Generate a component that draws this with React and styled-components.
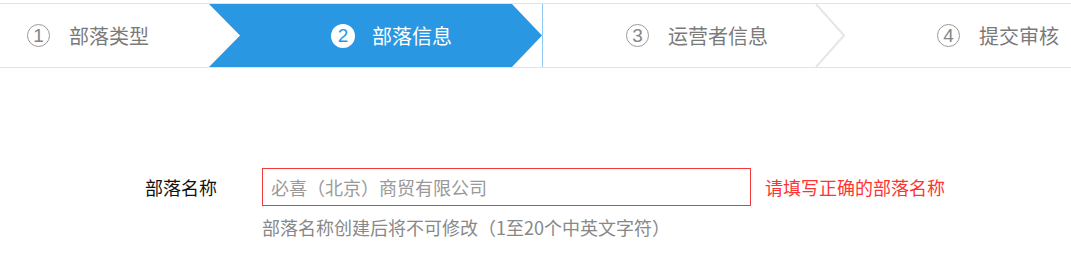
import React from 'react'
import styled, { createGlobalStyle } from 'styled-components'

const GlobalStyle = createGlobalStyle`
  body {
    margin: 0;
    background: #fff;
    font-family: "Noto Sans CJK SC", "Noto Sans", sans-serif;
  }
`

const steps = [
  { num: 1, text: '部落类型', width: 209, pad: 27 },
  { num: 2, text: '部落信息', width: 333, pad: 122, active: true },
  { num: 3, text: '运营者信息', width: 273, pad: 83, divided: true },
  { num: 4, text: '提交审核', width: 226, pad: 92 }
]

class App extends React.Component {

  renderSteps(){
    return steps.map((step) => {
      const item = (
        <Step key={step.num} width={step.width} pad={step.pad} active={step.active} divided={step.divided}>
          <Num active={step.active}>{step.num}</Num>
          <StepText active={step.active}>{step.text}</StepText>
        </Step>
      )
      if (step.num !== 3) return item
      return [
        item,
        <Chevron key="chev" width="30" height="63" viewBox="0 0 30 63">
          <polyline points="1,0 29,31.5 1,63" fill="none" stroke="#e6e6e6" strokeWidth="2" />
        </Chevron>
      ]
    })
  }

  render () {
    return (
      <Page>
        <GlobalStyle />
        <StepBar>
          {this.renderSteps()}
        </StepBar>
        <Form>
          <Row>
            <Label>部落名称</Label>
            <Input placeholder="必喜（北京）商贸有限公司" />
            <Error>请填写正确的部落名称</Error>
          </Row>
          <Hint>部落名称创建后将不可修改（1至20个中英文字符）</Hint>
        </Form>
      </Page>
    )
  }
}

const Page = styled.div`
  width: 1071px;
  padding-top: 3px;
`

const StepBar = styled.div`
  display: flex;
  height: 63px;
  border-top: 1px solid #e3e3e3;
  border-bottom: 1px solid #e3e3e3;
  overflow: hidden;
`

const Step = styled.div`
  flex: 0 0 ${(props) => props.width}px;
  box-sizing: border-box;
  display: flex;
  align-items: center;
  gap: ${(props) => props.active ? 17 : 19}px;
  padding-left: ${(props) => props.pad}px;
  background: ${(props) => props.active ? '#2a97e2' : 'transparent'};
  border-left: ${(props) => props.divided ? '1px solid #8ecaf3' : 'none'};
  clip-path: ${(props) => props.active
    ? 'polygon(0 0, calc(100% - 30px) 0, 100% 50%, calc(100% - 30px) 100%, 0 100%, 31px 50%)'
    : 'none'};
`

const Num = styled.span`
  box-sizing: border-box;
  width: ${(props) => props.active ? 24 : 23}px;
  height: ${(props) => props.active ? 24 : 23}px;
  border-radius: 50%;
  border: ${(props) => props.active ? 'none' : '1.5px solid #9a9a9a'};
  background: ${(props) => props.active ? '#fff' : 'transparent'};
  color: ${(props) => props.active ? '#2a97e2' : '#858585'};
  font-family: "Liberation Sans", Arial, sans-serif;
  font-size: 19px;
  display: flex;
  align-items: center;
  justify-content: center;
  line-height: 1;
`

const StepText = styled.span`
  font-size: 20px;
  color: ${(props) => props.active ? '#fff' : '#7a7a7a'};
  white-space: nowrap;
`

const Chevron = styled.svg`
  flex: 0 0 30px;
  display: block;
`

const Form = styled.div`
  padding: 100px 0 0 145px;
  font-size: 18px;
`

const Row = styled.div`
  display: flex;
  align-items: center;
`

const Label = styled.div`
  width: 117px;
  color: #111;
`

const Input = styled.input`
  box-sizing: border-box;
  width: 489px;
  height: 38px;
  border: 1px solid #f23a3a;
  padding: 0 8px;
  outline: none;
  font-family: inherit;
  font-size: 18px;
  color: #333;
  &::placeholder {
    color: #999;
  }
`

const Error = styled.span`
  margin-left: 14px;
  color: #f33;
`

const Hint = styled.div`
  margin: 9px 0 0 117px;
  line-height: 24px;
  color: #888;
`

export default App
